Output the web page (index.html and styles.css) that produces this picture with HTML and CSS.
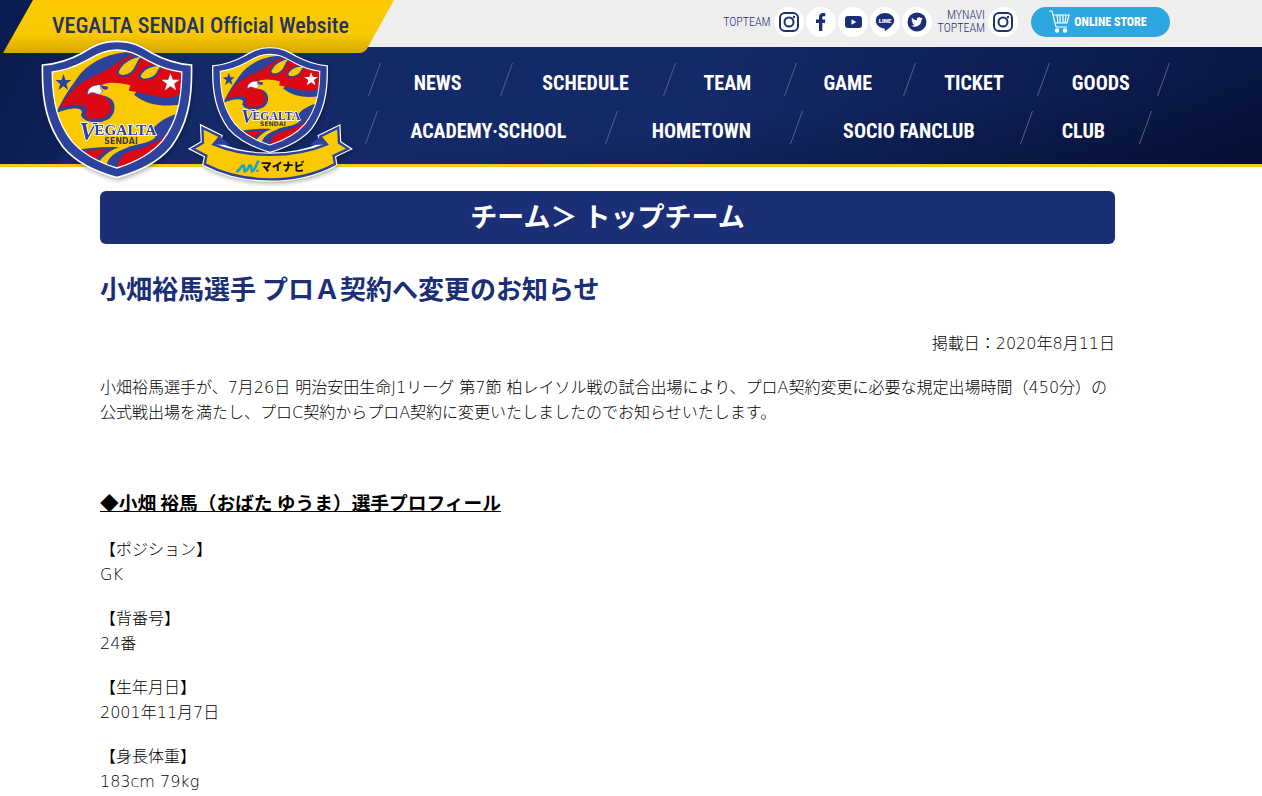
FILE: index.html
```
<!DOCTYPE html>
<html lang="ja">
<head>
    <meta charset="UTF-8">
    <meta name="viewport" content="width=device-width, initial-scale=1.0">
    <title>小畑裕馬選手 プロＡ契約へ変更のお知らせ</title>
    <link rel="stylesheet" href="styles.css">
</head>
<body>
    <!-- shared shapes -->
    <svg class="defs" aria-hidden="true">
        <symbol id="emblem" viewBox="15 2 455 417" overflow="visible">
            <clipPath id="field">
                <path d="M242 32C285 33 305 48 335 64C368 82 400 94 437 98C436 190 420 250 380 303C345 345 300 368 242 386C184 368 140 345 105 303C65 250 49 190 48 98C85 94 117 82 150 64C180 48 200 33 242 32Z"/>
            </clipPath>
            <path fill="#2c429b" stroke="#fff" stroke-width="5" d="M242 6C290 6 315 22 345 40C385 62 425 74 466 77C469 190 450 260 405 322C365 370 310 395 242 415C175 395 120 370 80 322C35 260 16 190 19 77C60 74 100 62 140 40C170 22 195 6 242 6Z"/>
            <g clip-path="url(#field)">
                <path fill="#fbc900" d="M40 20h410v380H40z"/>
                <path fill="#2c429b" d="M60 222C78 180 105 140 134 102C170 62 225 38 290 38L445 70V194C400 204 350 206 306 184L232 170C242 200 236 236 206 244C180 254 140 248 134 226C148 208 118 198 60 222Z"/>
                <path fill="#dc0814" d="M72 207C96 158 130 128 174 110C222 94 240 66 284 47L440 92V160C406 184 358 172 328 164L276 154L200 170C232 186 232 224 204 234C184 242 150 242 148 226C164 200 130 184 72 207Z"/>
                <path fill="#fbc900" stroke="#2c429b" stroke-width="6" d="M324 47C290 52 258 66 245 96C243 113 268 114 286 100C306 84 300 62 324 47Z"/>
                <path fill="#fbc900" stroke="#2c429b" stroke-width="6" d="M380 80C352 72 320 86 310 110C314 126 340 122 354 112C370 100 364 88 380 80Z"/>
                <path fill="#fbc900" d="M188 142C206 126 248 128 282 138L278 154L300 158L294 166C334 200 390 204 445 194V225C390 232 372 244 350 268L225 262C216 250 250 214 228 182C218 172 206 168 190 166Z"/>
                <path fill="#fff" stroke="#2c429b" stroke-width="2" d="M154 168C152 148 166 136 194 136C190 144 194 152 200 154C196 166 188 168 178 162C168 158 160 160 154 168Z"/>
                <path fill="#2c429b" d="M193 138L216 142L214 150C206 154 198 150 193 138Z"/>
                <path fill="#2c429b" d="M430 222C390 232 364 250 350 270L358 292C326 318 258 318 210 350L205 392L300 392L440 290Z"/>
                <path fill="#fbc900" d="M240 324C216 334 192 354 180 372L210 382C214 354 232 340 280 322Z"/>
                <path fill="#fbc900" d="M200 250H352L356 296C330 318 260 322 200 322Z"/>
                <path fill="#dc0814" d="M410 264C380 308 326 326 276 338C250 350 244 372 242 390C310 380 390 330 420 270Z"/>
                <path fill="#2c429b" d="M112 332C156 328 200 320 248 324C216 336 196 354 184 376L136 350Z"/>
                <path fill="#dc0814" d="M136 338C162 332 190 330 214 332C194 342 186 352 178 364Z"/>
                <path fill="#2c429b" d="M82 104l6 18 17 0-14 12 5 18-14-11-15 11 5-18-14-12 18 0z"/>
                <path fill="#fff" d="M403 102l7 19 20 0-16 12 6 20-17-12-17 12 6-20-16-12 20 0z"/>
            </g>
            <path fill="none" stroke="#fff" stroke-width="4" d="M242 32C285 33 305 48 335 64C368 82 400 94 437 98C436 190 420 250 380 303C345 345 300 368 242 386C184 368 140 345 105 303C65 250 49 190 48 98C85 94 117 82 150 64C180 48 200 33 242 32Z"/>
            <text class="emblem-initial" x="130" y="302">V</text>
            <text class="emblem-name" x="174" y="288">EGALTA</text>
            <text class="emblem-town" x="204" y="314">SENDAI</text>
        </symbol>
    </svg>

    <header class="header">
        <div class="site-tab">
            <svg class="tab-shape" viewBox="0 0 396 54" aria-hidden="true">
                <defs>
                    <linearGradient id="tab" x1="0" y1="0" x2="0" y2="1">
                        <stop offset="0" stop-color="#fdcb00"/>
                        <stop offset=".65" stop-color="#fac800"/>
                        <stop offset="1" stop-color="#d6a800"/>
                    </linearGradient>
                </defs>
                <path fill="#0b1c50" d="M0 0H34L3 54H0z"/>
                <path fill="url(#tab)" d="M33 0H394L368 47Q365 53 359 53H3z"/>
            </svg>
            <a href="#" class="site-name">VEGALTA SENDAI Official Website</a>
        </div>

        <div class="top-bar">
            <div class="social">
                <span class="social-label">TOPTEAM</span>
                <a href="#" class="social-icon" aria-label="Instagram">
                    <svg viewBox="0 0 30 30"><g fill="none" stroke="#1a2f75" stroke-width="2"><rect x="6" y="6" width="18" height="18" rx="5"/><circle cx="15" cy="15" r="4.500"/></g><circle cx="20" cy="10" r="1.200" fill="#1a2f75"/></svg>
                </a>
                <a href="#" class="social-icon" aria-label="Facebook">
                    <svg viewBox="0 0 30 30"><path fill="#1a2f75" d="M13 24V16h-3v-3.500h3V10.500C13 7.500 14.500 6 17 6h2.300v3.200h-1.600c-1.100 0-1.400.500-1.400 1.500v1.800h3l-.4 3.500h-2.600v8z"/></svg>
                </a>
                <a href="#" class="social-icon" aria-label="YouTube">
                    <svg viewBox="0 0 30 30"><rect x="7" y="9" width="17" height="12" rx="3" fill="#1a2f75"/><path fill="#fff" d="M13.500 12.200v5.600l4.800-2.800z"/></svg>
                </a>
                <a href="#" class="social-icon" aria-label="LINE">
                    <svg viewBox="0 0 30 30"><path fill="#1a2f75" d="M15 6c5 0 9.200 3.200 9.200 7.500 0 4-4.800 7.600-9.200 10.700-.6-.3.200-1.900-.3-2.600C9.600 21.300 5.800 18 5.800 13.500 5.800 9.200 10 6 15 6z"/><text class="line-text" x="15" y="16">LINE</text></svg>
                </a>
                <a href="#" class="social-icon" aria-label="Twitter">
                    <svg viewBox="0 0 30 30"><circle cx="15" cy="15" r="9.500" fill="#1a2f75"/><path fill="#fff" d="M20.800 11.300c-.4.200-.9.300-1.300.4.500-.3.800-.7 1-1.300-.5.300-1 .5-1.500.6a2.400 2.400 0 0 0-4.100 2.200c-2-.1-3.700-1-4.900-2.500-.6 1.100-.3 2.500.7 3.200-.4 0-.8-.1-1.100-.3 0 1.200.8 2.200 1.900 2.400-.3.100-.7.100-1.100 0 .3 1 1.200 1.700 2.200 1.700-1 .8-2.200 1.100-3.500 1 4.500 2.800 10.500-.3 10.500-6.200.5-.3.900-.7 1.200-1.200z"/></svg>
                </a>
                <span class="social-label">MYNAVI<br>TOPTEAM</span>
                <a href="#" class="social-icon" aria-label="MYNAVI Instagram">
                    <svg viewBox="0 0 30 30"><g fill="none" stroke="#1a2f75" stroke-width="2"><rect x="6" y="6" width="18" height="18" rx="5"/><circle cx="15" cy="15" r="4.500"/></g><circle cx="20" cy="10" r="1.200" fill="#1a2f75"/></svg>
                </a>
            </div>
            <a href="#" class="store">
                <svg class="cart" viewBox="0 0 22 24" fill="none" stroke="#fff" stroke-width="1.200"><path d="M1 1h3l4 16h11M5 5h16l-2 8H7M9 5l1 8M12 5v8M15 5v8M18 5l-1 8"/><circle cx="9" cy="20.500" r="1.600" fill="#fff"/><circle cx="17" cy="20.500" r="1.600" fill="#fff"/></svg>
                ONLINE STORE
            </a>
        </div>

        <nav class="nav">
            <ul class="nav-row nav-main">
                <li><a href="#">NEWS</a></li>
                <li><a href="#">SCHEDULE</a></li>
                <li><a href="#">TEAM</a></li>
                <li><a href="#">GAME</a></li>
                <li><a href="#">TICKET</a></li>
                <li><a href="#">GOODS</a></li>
            </ul>
            <ul class="nav-row nav-sub">
                <li><a href="#">ACADEMY·SCHOOL</a></li>
                <li><a href="#">HOMETOWN</a></li>
                <li><a href="#">SOCIO FANCLUB</a></li>
                <li><a href="#">CLUB</a></li>
            </ul>
        </nav>

        <div class="crests">
            <a href="#" aria-label="VEGALTA SENDAI"><svg class="crest"><use href="#emblem"/></svg></a>
            <a href="#" aria-label="マイナビ VEGALTA SENDAI">
                <svg class="crest-mynavi" viewBox="564 138 494 412">
                    <path fill="#fbc900" stroke="#fff" stroke-width="14" d="M607 382L660 408L652 432C740 474 880 474 968 432L960 408L1014 382L1016 427L1044 445L1000 466L1004 491C890 552 730 552 614 491L619 466L578 445L609 427Z"/>
                    <path fill="#fbc900" stroke="#2c429b" stroke-width="7" d="M607 382L660 408L640 432C740 474 880 474 980 432L960 408L1014 382L1016 427L1044 445L1000 466L1004 491C890 552 730 552 614 491L619 466L578 445L609 427Z"/>
                    <path fill="#2c429b" d="M660 408L640 432L692 434ZM960 408L980 432L928 434Z"/>
                    <use href="#emblem" x="635" y="139" width="349" height="320"/>
                    <path fill="none" stroke="#1aa5c8" stroke-width="8" d="M709 515C722 506 726 492 731 496C736 500 728 518 738 511C748 502 746 492 752 496C758 500 750 518 759 511C767 502 770 492 775 480"/>
                    <circle cx="772" cy="511" r="4" fill="#1aa5c8"/>
                    <text class="mynavi-text" x="782" y="513">マイナビ</text>
                </svg>
            </a>
        </div>
    </header>

    <main class="content">
        <h1 class="page-title">チーム＞ トップチーム</h1>

        <article class="article">
            <h2 class="article-title">小畑裕馬選手 プロＡ契約へ変更のお知らせ</h2>
            <p class="date">掲載日：2020年8月11日</p>
            <p>小畑裕馬選手が、7月26日 明治安田生命J1リーグ 第7節 柏レイソル戦の試合出場により、プロA契約変更に必要な規定出場時間（450分）の公式戦出場を満たし、プロC契約からプロA契約に変更いたしましたのでお知らせいたします。</p>

            <h3 class="profile-title">◆小畑 裕馬（おばた ゆうま）選手プロフィール</h3>
            <p>【ポジション】<br>GK</p>
            <p>【背番号】<br>24番</p>
            <p>【生年月日】<br>2001年11月7日</p>
            <p>【身長体重】<br>183cm 79kg</p>
        </article>
    </main>
</body>
</html>
```

FILE: styles.css
```
* {
    margin: 0;
    padding: 0;
    box-sizing: border-box;
}

body {
    font-family: "DejaVu Sans", "Noto Sans CJK JP", sans-serif;
    font-size: 16px;
    font-weight: 300;
    line-height: 25px;
    color: #000;
    background: #fff;
}

h1,
h2,
h3 {
    font-family: "Noto Sans CJK JP", sans-serif;
    font-weight: 700;
}

a {
    color: inherit;
    text-decoration: none;
}

.defs {
    position: absolute;
    width: 0;
    height: 0;
}

/* header */
.header {
    position: relative;
    font-family: "Roboto Condensed", "Liberation Sans Narrow", Roboto, sans-serif;
}

.site-tab {
    position: absolute;
    top: 0;
    left: 0;
    z-index: 1;
    width: 396px;
}

.tab-shape {
    display: block;
    width: 100%;
}

.site-name {
    position: absolute;
    top: 13px;
    left: 52px;
    font-size: 22px;
    font-weight: 500;
    font-variant-ligatures: none;
    white-space: nowrap;
    color: #25345c;
}

.top-bar {
    display: flex;
    justify-content: flex-end;
    align-items: center;
    gap: 13px;
    height: 47px;
    padding: 0 92px 3px 400px;
    background: #eee;
}

.social {
    display: flex;
    align-items: center;
    gap: 2px;
}

.social-label {
    padding: 0 1px 0 4px;
    font-size: 12px;
    font-weight: 300;
    line-height: 13px;
    text-align: right;
    color: #1a2f75;
}

.social-icon {
    width: 30px;
    height: 30px;
    border-radius: 50%;
    background: #fff;
}

.social-icon svg {
    display: block;
}

.line-text {
    font-family: Roboto, sans-serif;
    font-size: 6px;
    font-weight: 900;
    text-anchor: middle;
    fill: #fff;
}

.store {
    display: flex;
    justify-content: center;
    align-items: center;
    gap: 4px;
    width: 139px;
    height: 30px;
    padding-right: 6px;
    border-radius: 15px;
    font-size: 12px;
    font-weight: 800;
    white-space: nowrap;
    color: #fff;
    background: #2ea7e0;
}

.cart {
    width: 22px;
    height: 24px;
}

.nav {
    padding: 16px 98px 20px 374px;
    border-bottom: 3px solid #fbc81e;
    background:
        linear-gradient(to bottom right, transparent 60%, rgba(3, 8, 32, 0.4)),
        linear-gradient(115deg, #0a1a4c 0, #0e2058 8%, #142967 9%, #142967 55%, #0b1a4b 88%, #081540 100%);
}

.nav-row {
    display: grid;
    list-style: none;
}

.nav-main {
    grid-template-columns: 133fr 162fr 121fr 119fr 133fr 120fr;
    margin-bottom: 15px;
}

.nav-sub {
    grid-template-columns: 240fr 185fr 229fr 119fr;
    margin: 0 18px 0 -3px;
}

.nav-row li {
    position: relative;
    height: 33px;
    padding-right: 6px;
    font-size: 20px;
    font-weight: 700;
    line-height: 41px;
    text-align: center;
    color: #fff;
}

.nav-row li::after,
.nav-row li:first-child::before {
    content: '';
    position: absolute;
    top: 0;
    right: 0;
    width: 1px;
    height: 33px;
    background: #52628f;
    transform: skewX(-20deg);
}

.nav-row li:first-child::before {
    right: auto;
    left: 0;
}

.crests {
    position: absolute;
    top: 40px;
    left: 41px;
    z-index: 2;
    display: flex;
    align-items: flex-start;
}

.crests a {
    display: block;
}

.crests svg {
    display: block;
    filter: drop-shadow(1px 2px 2px rgba(0, 0, 0, 0.3));
}

.crest {
    width: 152px;
    height: 139px;
}

.crest-mynavi {
    width: 165px;
    height: 138px;
    margin: 6px 0 0 -5px;
}

.emblem-name,
.emblem-initial {
    font-family: "Liberation Serif", serif;
    font-size: 46px;
    font-weight: 700;
    fill: #2c429b;
    stroke: #fff;
    stroke-width: 5px;
    paint-order: stroke;
}

.emblem-initial {
    font-size: 74px;
    font-style: italic;
}

.emblem-town {
    font-family: "DejaVu Sans", sans-serif;
    font-size: 24px;
    font-weight: 700;
    fill: #3a3a4a;
}

.mynavi-text {
    font-family: "Noto Sans CJK JP", sans-serif;
    font-size: 33px;
    font-weight: 900;
    fill: #111;
}

/* content */
.content {
    padding: 24px 147px 0 100px;
}

.page-title {
    padding: 0 0 3px;
    border-radius: 6px;
    font-size: 27px;
    line-height: 50px;
    text-align: center;
    color: #fff;
    background: #1a2f75;
}

.article-title {
    margin: 24px 0 23px;
    font-size: 26px;
    line-height: 40px;
    color: #1a2f75;
}

.article p {
    margin-bottom: 19px;
}

.article p:last-child {
    margin-bottom: 0;
}

.article .date {
    text-align: right;
}

.article .profile-title {
    margin: 62px 0 21px;
    line-height: 29px;
    text-decoration: underline;
}
```
